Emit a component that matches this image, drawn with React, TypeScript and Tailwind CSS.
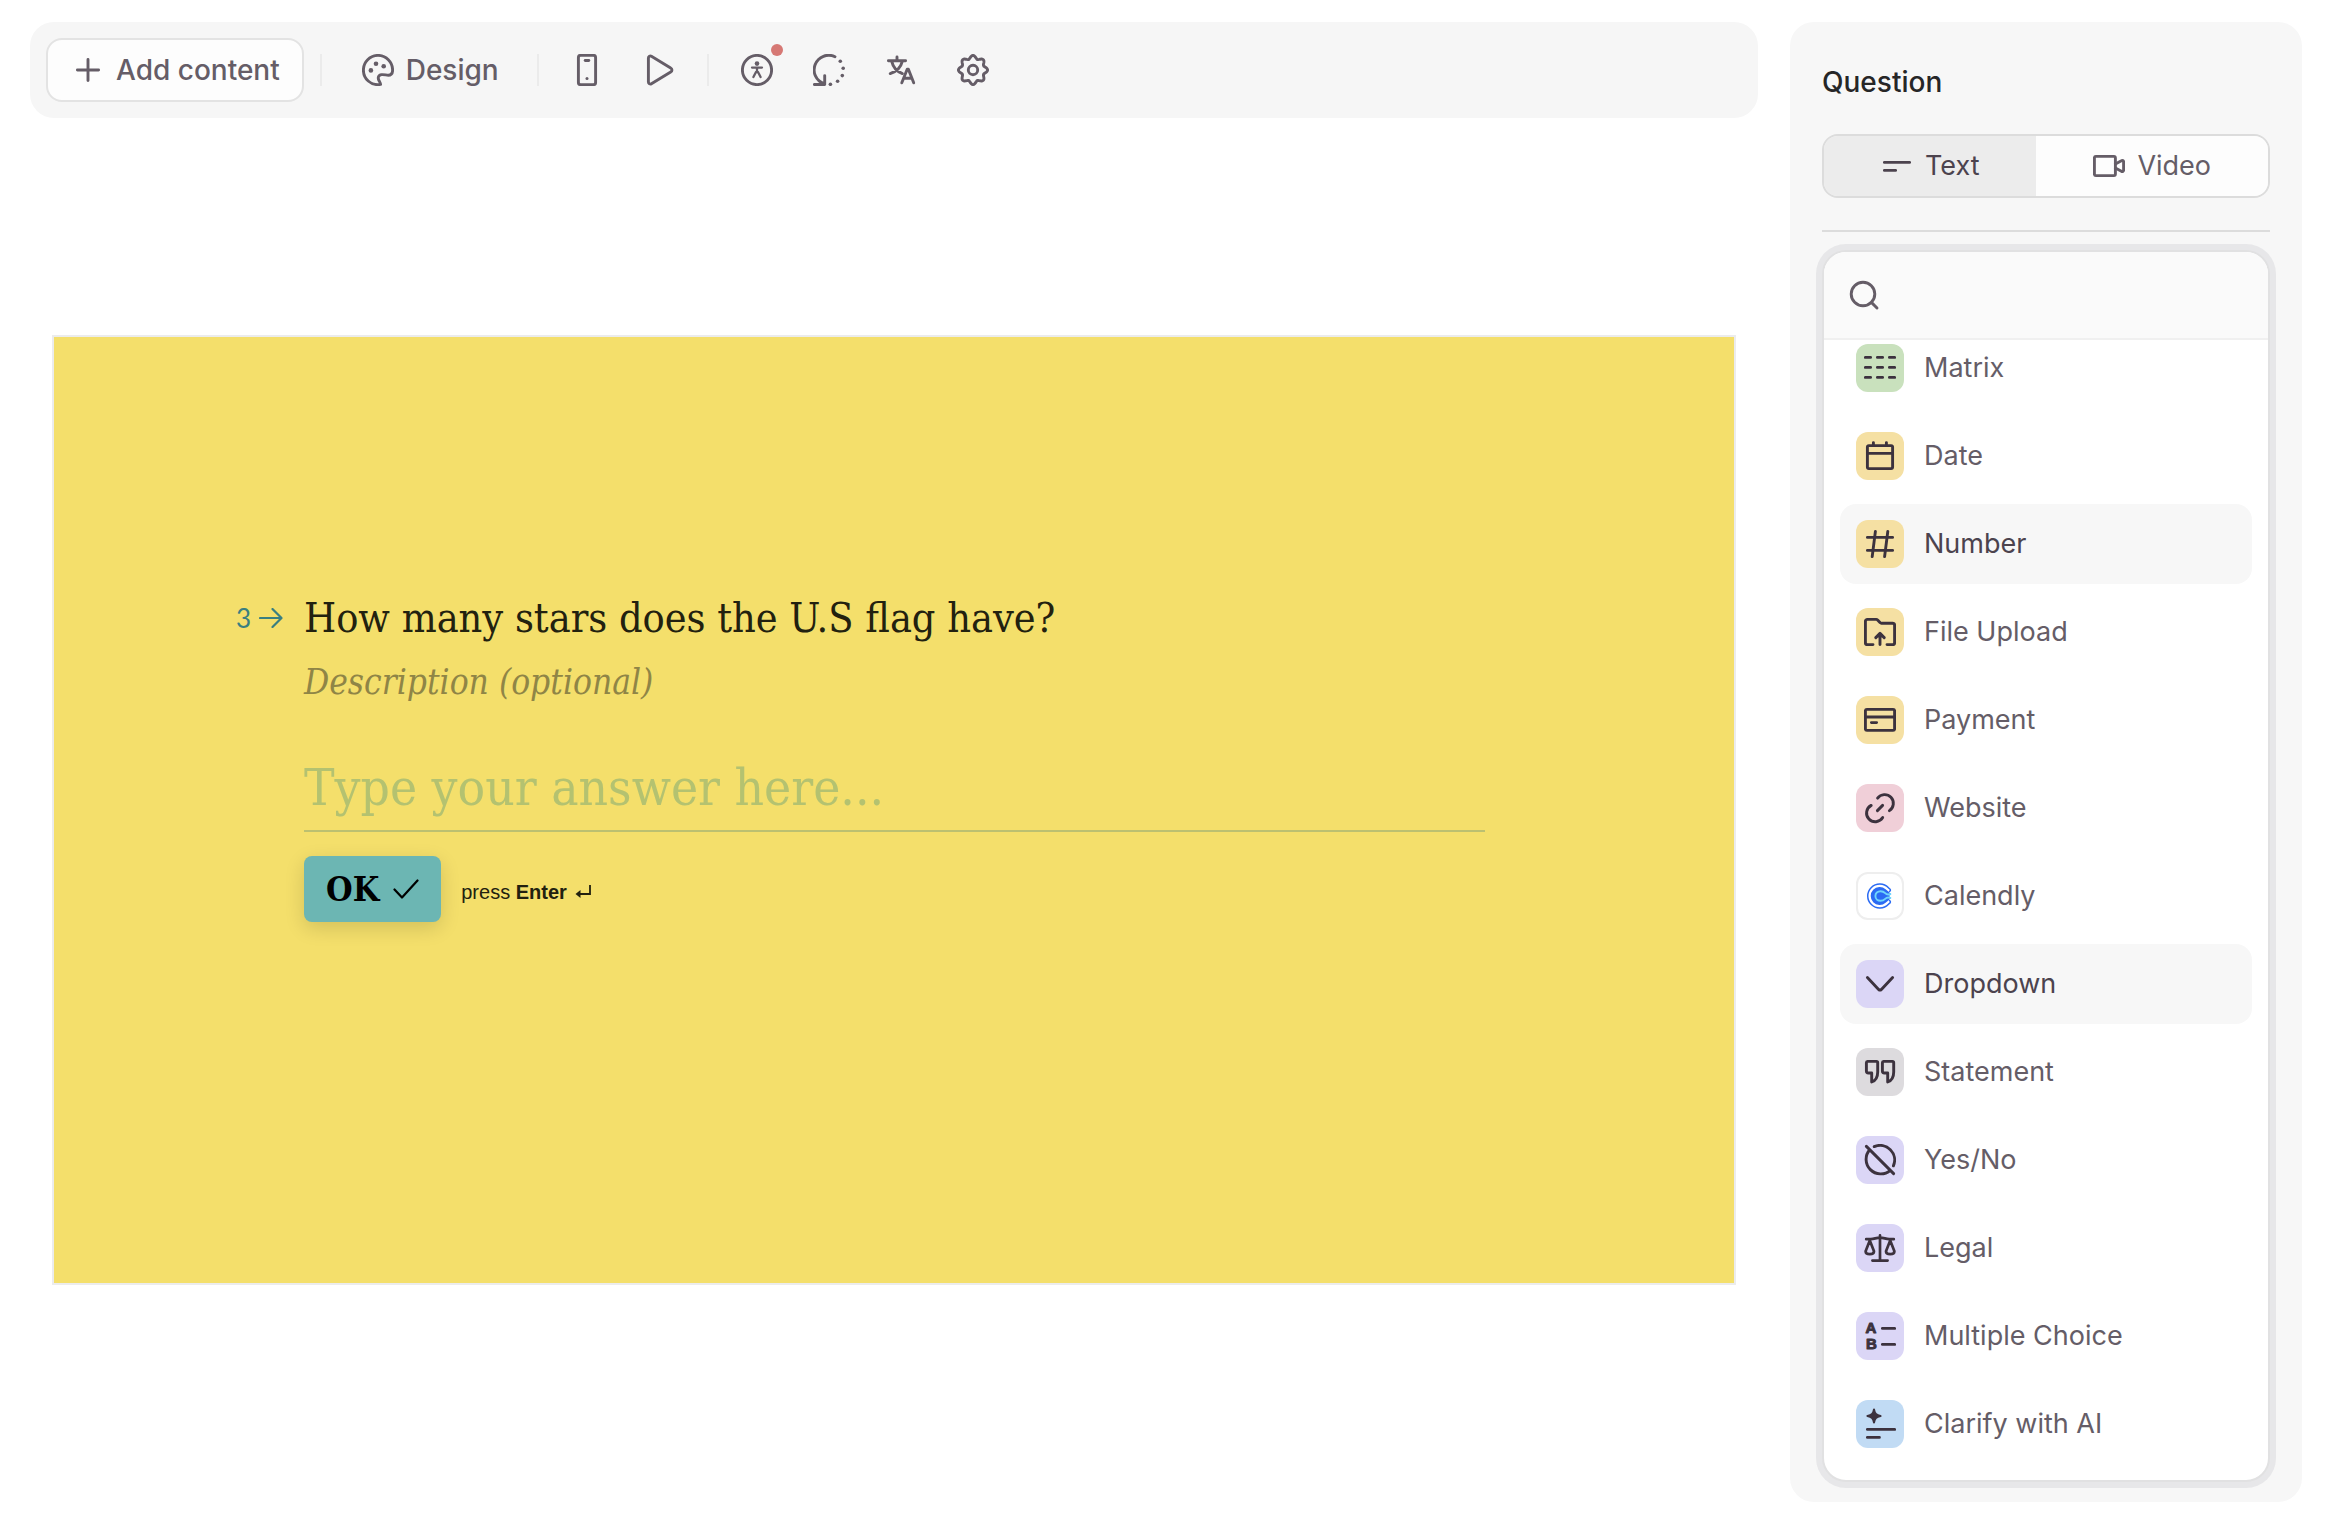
import type { ReactNode } from "react";

type IconProps = { children: ReactNode };

function Icon({ children }: IconProps) {
  return (
    <svg
      viewBox="0 0 32 32"
      className="size-8 shrink-0"
      fill="none"
      stroke="currentColor"
      strokeWidth="2.9"
      strokeLinecap="round"
      strokeLinejoin="round"
      aria-hidden="true"
    >
      {children}
    </svg>
  );
}

// Eight-lobed outline of the settings gear
const gearPath =
  Array.from({ length: 96 }, (_, i) => {
    const a = (i / 96) * Math.PI * 2;
    const r = 13 + 1.6 * Math.cos(8 * a);
    return `${i ? "L" : "M"}${(16 + r * Math.cos(a)).toFixed(2)} ${(16 + r * Math.sin(a)).toFixed(2)}`;
  }).join("") + "Z";

const tools = [
  {
    group: [
      {
        name: "Mobile view",
        icon: (
          <Icon>
            <rect x="7.4" y="1.4" width="17.2" height="29.2" rx="2.2" />
            <path d="M14.2 6.5h3.6" />
            <circle cx="16" cy="24.5" r="1.5" fill="currentColor" stroke="none" />
          </Icon>
        ),
      },
      {
        name: "Preview",
        icon: (
          <Icon>
            <path d="M5.4 3.9a2 2 0 0 1 3-1.7l19.3 11.7a2.4 2.4 0 0 1 0 4.2L8.4 29.8a2 2 0 0 1-3-1.7z" />
          </Icon>
        ),
      },
    ],
  },
  {
    group: [
      {
        name: "Accessibility",
        badge: true,
        icon: (
          <Icon>
            <circle cx="16" cy="16" r="14.6" />
            <circle cx="16" cy="9.6" r="2.3" fill="currentColor" stroke="none" />
            <path d="M11 13.6h10M16 13.6v4.6M12.4 23l2.6-5h2l2.6 5" strokeWidth="2.3" />
          </Icon>
        ),
      },
      {
        name: "Recall",
        icon: (
          <Icon>
            <path d="M22 2.7A14.6 14.6 0 1 0 11 29.7M11.7 21.6v8.9H1.4" />
            <g fill="currentColor" stroke="none">
              <circle cx="27.3" cy="7.3" r="1.8" />
              <circle cx="30.2" cy="14.2" r="1.8" />
              <circle cx="29.3" cy="21.6" r="1.8" />
              <circle cx="24.6" cy="27.2" r="1.8" />
              <circle cx="17.4" cy="30.3" r="1.8" />
            </g>
          </Icon>
        ),
      },
      {
        name: "Translate",
        icon: (
          <Icon>
            <path d="M3.4 6.7h17.2M12 3v3.7M6.8 7.6c1.3 5.6 5.4 10 10.6 12M17.2 7.6C15.9 13 11.4 17.6 5.2 19.6" />
            <path d="M16.8 28.8 22.2 15.2h1.2L28.7 28.8M19.2 24.2h7.4" />
          </Icon>
        ),
      },
      {
        name: "Settings",
        icon: (
          <Icon>
            <path d={gearPath} />
            <circle cx="16" cy="16" r="4.7" />
          </Icon>
        ),
      },
    ],
  },
];

const questionTypes = [
  {
    name: "Matrix",
    tile: "bg-[#c9e1bd]",
    icon: (
      <path d="M1.4 5.4h5.2M13.4 5.4h5.2M25.4 5.4h5.2M1.4 15.4h5.2M13.4 15.4h5.2M25.4 15.4h5.2M1.4 25.4h5.2M13.4 25.4h5.2M25.4 25.4h5.2" />
    ),
  },
  {
    name: "Date",
    tile: "bg-[#f5e0a3]",
    icon: (
      <>
        <rect x="3.4" y="5.6" width="25.2" height="23" rx="1.5" />
        <path d="M3.4 13.4h25.2M9.4 2.6v3M22.4 2.6v3" />
      </>
    ),
  },
  {
    name: "Number",
    tile: "bg-[#f5e0a3]",
    active: true,
    icon: <path d="M3.4 9.4h25.2M3.4 22.4h25.2M11.4 3.4 8.2 28.6M23.8 3.4l-3.2 25.2" />,
  },
  {
    name: "File Upload",
    tile: "bg-[#f5e0a3]",
    icon: (
      <path d="M9 28.6H3.4a2 2 0 0 1-2-2V5.4a2 2 0 0 1 2-2h8.8a2 2 0 0 1 1.4.6l2.4 2.6a2 2 0 0 0 1.4.6h11.2a2 2 0 0 1 2 2v17.4a2 2 0 0 1-2 2H23M16 28.6V17.8M11.8 21.6 16 17.4l4.2 4.2" />
    ),
  },
  {
    name: "Payment",
    tile: "bg-[#f5e0a3]",
    icon: (
      <>
        <rect x="1.4" y="5.4" width="29.2" height="21" rx="1.5" />
        <path d="M1.4 13h29.2M7.4 18.6h5.2" />
      </>
    ),
  },
  {
    name: "Website",
    tile: "bg-[#f0cfd8]",
    icon: (
      <path d="M13.6 6.2A8.7 8.7 0 1 1 25.4 18.6M7.2 13.4A8.7 8.7 0 1 0 18.7 25.6M13.4 18.6l5.2-5.2" />
    ),
  },
  {
    name: "Calendly",
    tile: "border-2 border-[#eeeeee] bg-white",
    icon: (
      <>
        <path
          d="M25.6 11.4c1.4-.8 1-2.2-1.1-3.6a12 12 0 1 0 0 16.4c2.1-1.4 2.5-2.8 1.1-3.6"
          stroke="#2b6bf3"
          strokeWidth="1.5"
        />
        <path
          d="M24.4 11.5 21.6 9.2A9 9 0 1 0 21.6 22.8L24.4 20.5l2.6-2.5c-2-.6-2-3.4 0-4z"
          fill="#2b6bf3"
          stroke="none"
        />
        <path
          d="M26.4 14c-2.6 1-4 .4-5.2-.8-1.6-1.6-3-2-4.6-2-3 0-5.2 2-5.2 4.8s2.200 4.8 5.2 4.8c1.6 0 3-.4 4.6-2 1.2-1.2 2.6-1.8 5.2-.8"
          stroke="#6fd6fb"
          strokeWidth="1.9"
        />
      </>
    ),
  },
  {
    name: "Dropdown",
    tile: "bg-[#dbd6f6]",
    active: true,
    icon: <path d="M3.4 9.6 14.6 21.4a2 2 0 0 0 2.8 0L28.6 9.6" />,
  },
  {
    name: "Statement",
    tile: "bg-[#dddbde]",
    icon: (
      <>
        <path d="M3.6 5.4h8.8a1.3 1.3 0 0 1 1.3 1.3v9.3c0 5-1.7 8.5-6 10V17H4.4a2 2 0 0 1-2-2V6.7a1.3 1.3 0 0 1 1.2-1.3z" />
        <path d="M19.6 5.4h8.8a1.3 1.3 0 0 1 1.3 1.3v9.3c0 5-1.7 8.5-6 10V17h-3.3a2 2 0 0 1-2-2V6.7a1.3 1.3 0 0 1 1.2-1.3z" />
      </>
    ),
  },
  {
    name: "Yes/No",
    tile: "bg-[#dbd6f6]",
    icon: (
      <path d="M10.2 2.6A14.6 14.6 0 0 1 29.4 21.8M26.3 26.3A14.6 14.6 0 0 1 5.7 5.7M2.4 2.4l27.2 27.2" />
    ),
  },
  {
    name: "Legal",
    tile: "bg-[#dbd6f6]",
    icon: (
      <path
        d="M16 3.4v25.2M8.4 28.6h15.2M2.2 7.2h4.6c3.4 0 5.6-1.6 9.2-1.6s5.8 1.6 9.2 1.6h4.6M5.8 8.6 1.6 19.2c0 4 8.4 4 8.4 0zM26.2 8.6 22 19.2c0 4 8.4 4 8.4 0z"
        strokeWidth="2.7"
      />
    ),
  },
  {
    name: "Multiple Choice",
    tile: "bg-[#dbd6f6]",
    icon: (
      <>
        <g
          fill="currentColor"
          strokeWidth="1"
          fontFamily="Liberation Sans, sans-serif"
          fontWeight="700"
          fontSize="15"
          textAnchor="middle"
        >
          <text x="7" y="13.4">A</text>
          <text x="7.4" y="29.4">B</text>
        </g>
        <path d="M18.4 8.4h12.2M18.4 24.4h12.2" />
      </>
    ),
  },
  {
    name: "Clarify with AI",
    tile: "bg-[#c1dbf4]",
    icon: (
      <>
        <path
          d="M10 1.4c.8 4.4 2.2 5.8 6.6 6.6-4.4.8-5.8 2.2-6.6 6.6-.8-4.4-2.2-5.8-6.6-6.6 4.4-.8 5.8-2.2 6.6-6.6z"
          fill="currentColor"
          strokeWidth="2"
        />
        <path d="M3.4 21.4h27.2M3.4 29.4h12" />
      </>
    ),
  },
];

function Divider() {
  return <div className="h-8 w-0.5 bg-[#ebebeb]" />;
}

function Toolbar() {
  return (
    <header className="flex h-24 items-center rounded-3xl bg-[#f6f6f6] px-4 text-[28px] font-medium text-[#655d67]">
      <button className="flex h-16 items-center gap-3 rounded-2xl border-2 border-[#e3e3e3] bg-[#fdfdfd] pl-6 pr-[22px]">
        <Icon>
          <path d="M16 5.4v21.2M5.4 16h21.2" />
        </Icon>
        Add content
      </button>
      <div className="ml-4 mr-6">
        <Divider />
      </div>
      <button className="flex h-16 items-center gap-3 px-4">
        <Icon>
          <path d="M18.6 30.4C8.6 32 1.4 24.6 1.4 16a14.6 14.6 0 0 1 29.2 0c0 3.8-1.4 5.2-4.4 5.2-2 0-4-.8-6.6-.6-3.6.4-4 3.8-2.4 6.4.8 1.4 1.4 2.2 1.4 3.4z" />
          <g fill="currentColor" stroke="none">
            <circle cx="14" cy="9.7" r="2.3" />
            <circle cx="21.7" cy="12.2" r="2.3" />
            <circle cx="8.9" cy="16.4" r="2.3" />
          </g>
        </Icon>
        Design
      </button>
      {tools.map(({ group }, i) => (
        <div key={i} className="flex items-center">
          <div className={i === 0 ? "ml-[22px] mr-3" : "mx-3"}>
            <Divider />
          </div>
          {group.map((tool) => (
            <button key={tool.name} aria-label={tool.name} className="relative px-5 py-4">
              {tool.icon}
              {tool.badge && (
                <span className="absolute right-2.5 top-1.5 size-3 rounded-full bg-[#d67874]" />
              )}
            </button>
          ))}
        </div>
      ))}
    </header>
  );
}

function QuestionCard() {
  return (
    <section className="mx-[22px] aspect-[1684/950] border-2 border-[#ececec] bg-[#f4df6b] pl-[182px] pr-[249px] pt-[251px] font-['DejaVu_Serif_Condensed','DejaVu_Serif',serif]">
      <div className="flex">
        <div className="flex h-[60px] w-[68px] shrink-0 items-center gap-2 font-['Lato',sans-serif] text-[26px] text-[#3a7f80]">
          3
          <svg viewBox="0 0 24 20" className="h-5 w-6" fill="none" stroke="currentColor" strokeWidth="2.2" aria-hidden="true">
            <path d="M1 10h21M13.5 1l9 9-9 9" strokeLinecap="round" strokeLinejoin="round" />
          </svg>
        </div>
        <div className="grow">
          <h1 className="text-[41px] leading-[60px] text-[#22210f]">
            How many stars does the U.S flag have?
          </h1>
          <p className="mt-1 text-[35px] italic leading-[60px] text-[#8f8546]">Description (optional)</p>
          <input
            aria-label="Answer"
            placeholder="Type your answer here..."
            className="mt-8 h-[88px] w-full border-b-2 border-[#bcc070] bg-transparent text-[51px] outline-none placeholder:text-[#b4c270]"
          />
          <div className="mt-6 flex items-center gap-5">
            <button className="flex h-[66px] items-center gap-3.5 rounded-lg bg-[#6cb6b3] px-[22px] text-[34px] font-bold text-black shadow-[0_6px_20px_rgba(0,0,0,0.14)]">
              OK
              <svg viewBox="0 0 26 20" className="h-5 w-[26px]" fill="none" stroke="currentColor" strokeWidth="2.2" aria-hidden="true">
                <path d="M1.5 10.5 9 18.5 24.5 1.5" strokeLinecap="round" strokeLinejoin="round" />
              </svg>
            </button>
            <p className="flex items-center gap-2 pt-1.5 font-['Liberation_Sans',sans-serif] text-xl text-[#22210f]">
              <span>
                press <strong>Enter</strong>
              </span>
              <svg viewBox="0 0 16 14" className="h-3.5 w-4" fill="none" stroke="currentColor" strokeWidth="1.8" aria-hidden="true">
                <path d="M15 0v9H3" />
                <path d="M5.5 5 .5 9l5 4z" fill="currentColor" stroke="none" />
              </svg>
            </p>
          </div>
        </div>
      </div>
    </section>
  );
}

function TypeMenu() {
  return (
    <div className="mt-[18px] grow overflow-hidden rounded-3xl border-2 border-[#e1e1e2] bg-white ring-6 ring-[#e7e7e9]">
      <label className="flex h-[88px] items-center gap-3 border-b-2 border-[#f0f0f0] bg-[#fafafa] px-6 text-[#655d67]">
        <Icon>
          <circle cx="15" cy="15" r="11.8" />
          <path d="M23.6 23.6 29 29" />
        </Icon>
        <input aria-label="Search question types" className="h-16 grow bg-transparent outline-none" />
      </label>
      <ul className="-mt-3 flex flex-col gap-2 px-4 pb-4">
        {questionTypes.map((type) => (
          <li key={type.name}>
            <button
              className={`flex h-20 w-full items-center gap-5 rounded-2xl px-4 ${
                type.active ? "bg-[#f7f7f7] text-[#4c434e]" : "text-[#655d67]"
              }`}
            >
              <span className={`flex size-12 items-center justify-center rounded-xl text-[#3c323e] ${type.tile}`}>
                <Icon>{type.icon}</Icon>
              </span>
              {type.name}
            </button>
          </li>
        ))}
      </ul>
    </div>
  );
}

function Sidebar() {
  return (
    <aside className="flex w-[512px] shrink-0 flex-col rounded-3xl bg-[#f7f7f7] px-8 pb-5 pt-10 text-[27px]">
      <h2 className="text-[28px] leading-10 font-medium text-[#262627]">Question</h2>
      <div className="mt-8 flex h-16 overflow-hidden rounded-2xl border-2 border-[#dcdcdc]">
        <button className="flex flex-auto items-center justify-center gap-3 bg-[#ececec] text-[#4c434e]">
          <Icon>
            <path d="M3.4 12.4h25.2M3.4 20.4h11.2" />
          </Icon>
          Text
        </button>
        <button className="flex flex-auto items-center justify-center gap-3 bg-[#fdfdfd] text-[#655d67]">
          <Icon>
            <rect x="1.4" y="6.4" width="21" height="19.2" rx="1.5" />
            <path d="m22.4 14 6-3.3a1.4 1.4 0 0 1 2.2 1.2v8.2a1.4 1.4 0 0 1-2.2 1.2l-6-3.3" />
          </Icon>
          Video
        </button>
      </div>
      <hr className="mt-8 border-t-2 border-[#dcdcdc]" />
      <TypeMenu />
    </aside>
  );
}

export default function App() {
  return (
    <div className="flex min-h-screen gap-8 bg-white pb-8 pl-[30px] pr-8 pt-[22px] font-['Inter',sans-serif]">
      <main className="flex min-w-0 grow flex-col">
        <Toolbar />
        <div className="flex grow flex-col justify-center">
          <QuestionCard />
        </div>
      </main>
      <Sidebar />
    </div>
  );
}
